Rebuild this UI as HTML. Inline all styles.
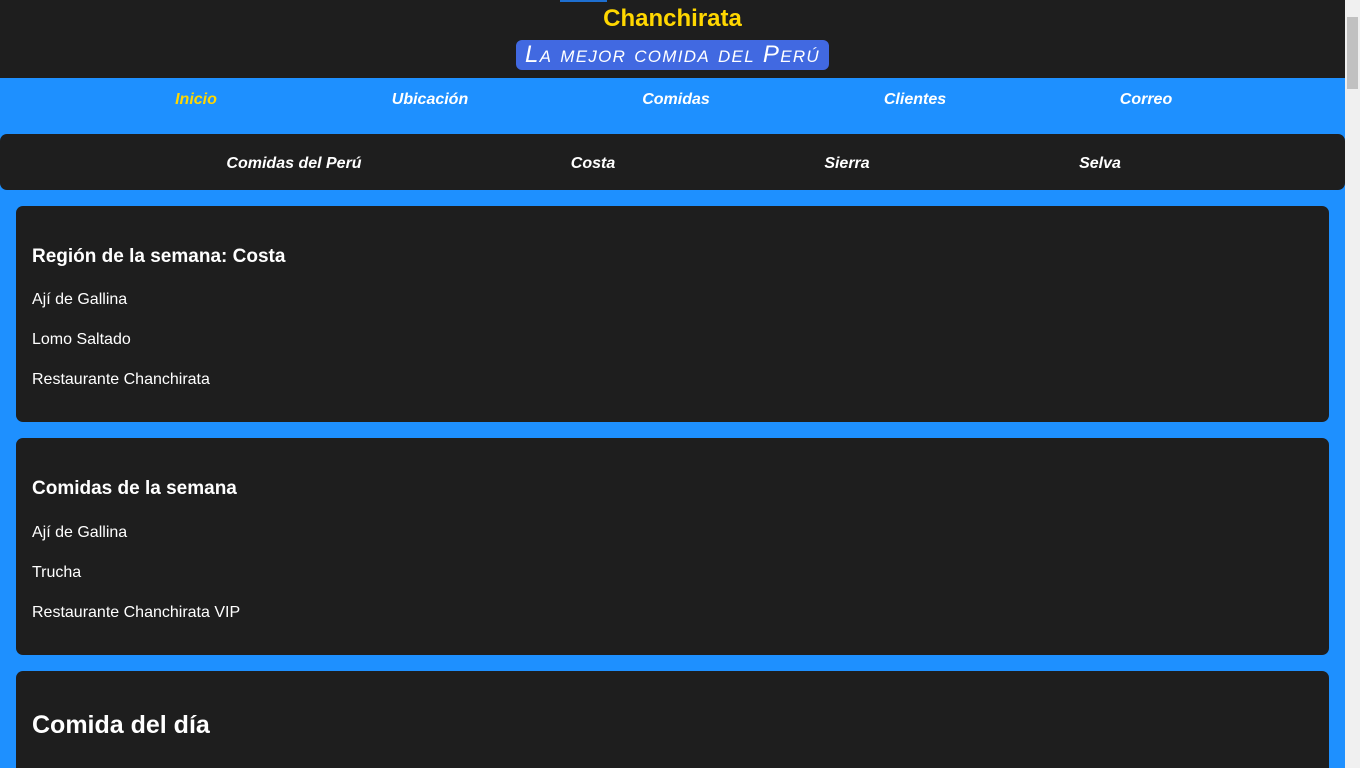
<!DOCTYPE html>
<html style="overflow:hidden;height:768px"><head><meta charset="utf-8"><style>
body{margin:0;width:1360px;height:768px;overflow:hidden;background:#1e90ff;font-family:"Liberation Sans",sans-serif;position:relative}
.a{position:absolute}
.card{position:absolute;left:16px;width:1313px;background:#1e1e1e;border-radius:7px;color:#fff}
.card h2{position:absolute;left:16px;margin:0;font-size:19px;font-weight:bold}
.card p{position:absolute;left:16px;margin:0;font-size:16px}
.nav a{position:absolute;color:#fff;font-style:italic;font-weight:bold;font-size:16px;transform:translateX(-50%);white-space:nowrap}
</style></head><body>
<div class="a" style="left:0;top:0;width:1345px;height:78px;background:#1e1e1e"></div>
<div class="a" style="left:560px;top:0;width:47px;height:2px;background:#1e6fd0"></div>
<div class="a" style="left:0;top:5px;width:1345px;text-align:center;color:#ffd700;font-weight:bold;font-size:24px">Chanchirata</div>
<div class="a" style="left:516px;top:40px;width:313px;height:30px;background:#4169e1;border-radius:6px;color:#fff;font-style:italic;font-size:24px;font-variant:small-caps;text-align:center;line-height:29px;letter-spacing:1.3px;white-space:nowrap">La mejor comida del Perú</div>
<div class="nav">
<a style="left:196px;top:91px;color:#ffd700">Inicio</a>
<a style="left:430px;top:91px">Ubicación</a>
<a style="left:676px;top:91px">Comidas</a>
<a style="left:915px;top:91px">Clientes</a>
<a style="left:1146px;top:91px">Correo</a>
</div>
<div class="a nav" style="left:0;top:134px;width:1345px;height:56px;background:#1e1e1e;border-radius:7px">
<a style="left:294px;top:21px">Comidas del Perú</a>
<a style="left:593px;top:21px">Costa</a>
<a style="left:847px;top:21px">Sierra</a>
<a style="left:1100px;top:21px">Selva</a>
</div>
<div class="card" style="top:206px;height:216px">
<h2 style="top:40px">Región de la semana: Costa</h2>
<p style="top:85px">Ají de Gallina</p><p style="top:125px">Lomo Saltado</p><p style="top:165px">Restaurante Chanchirata</p>
</div>
<div class="card" style="top:438px;height:217px">
<h2 style="top:40px">Comidas de la semana</h2>
<p style="top:86px">Ají de Gallina</p><p style="top:126px">Trucha</p><p style="top:166px">Restaurante Chanchirata VIP</p>
</div>
<div class="card" style="top:671px;height:120px">
<h2 style="top:40px;font-size:25px">Comida del día</h2>
</div>
<div class="a" style="left:1345px;top:0;width:15px;height:768px;background:#f0f0f0"></div>
<div class="a" style="left:1347px;top:17px;width:11px;height:72px;background:#c1c1c1"></div>
</body></html>
